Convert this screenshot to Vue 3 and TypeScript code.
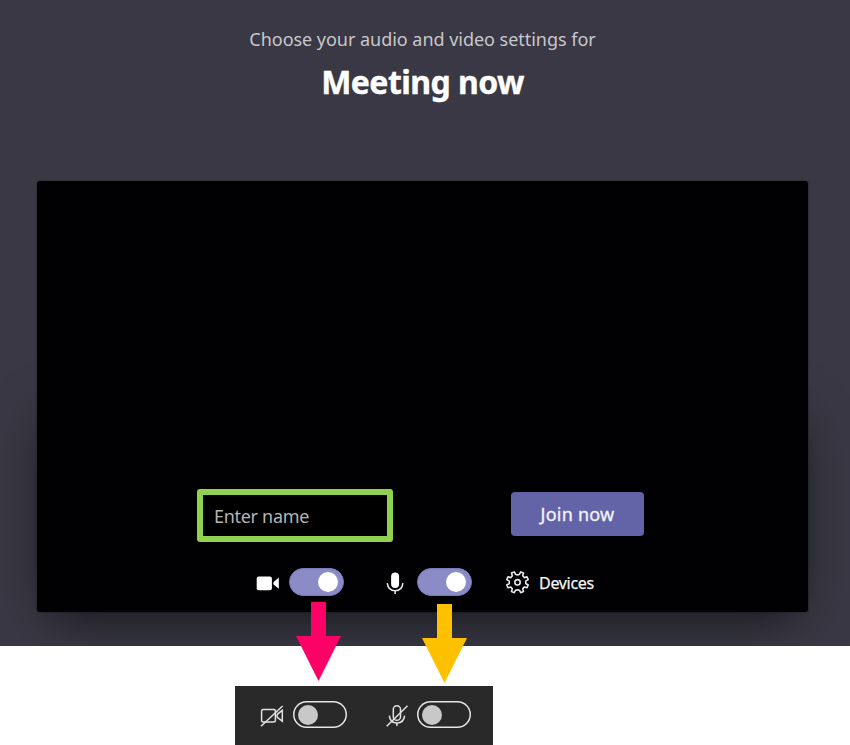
<script setup lang="ts">
import { ref } from 'vue'

const name = ref<string>('')
const camera = ref<boolean>(true)
const microphone = ref<boolean>(true)
</script>

<template>
  <main class="page">
    <section class="prejoin">
      <header class="heading">
        <p class="subtitle">Choose your audio and video settings for</p>
        <h1 class="title">Meeting now</h1>
      </header>

      <div class="preview">
        <div class="join-row">
          <input v-model="name" class="name" type="text" placeholder="Enter name" />
          <button class="join" type="button">Join now</button>
        </div>

        <div class="device-row">
          <svg class="icon" width="24" height="27" viewBox="0 0 24 27">
            <rect x="0.7" y="7.4" width="15.2" height="13.8" rx="2" fill="#fff" />
            <path d="M22.800 8.600v11.200l-5-4.100q-1.200-1.400 0-2.900z" fill="#fff" />
          </svg>
          <button class="toggle on" type="button" aria-label="Camera" @click="camera = !camera">
            <span class="knob"></span>
          </button>
          <svg class="icon mic" width="18" height="27" viewBox="0 0 18 27">
            <rect x="5.1" y="3.6" width="8" height="15.4" rx="4" fill="#fff" />
            <path d="M1.300 14.200c.5 4.700 3.400 7.600 7.800 7.600s7.300-2.900 7.800-7.600M9.100 21.800v3.200" fill="none" stroke="#eee" stroke-width="1.500" />
          </svg>
          <button class="toggle on" type="button" aria-label="Microphone" @click="microphone = !microphone">
            <span class="knob"></span>
          </button>
          <svg class="icon gear" width="24" height="27" viewBox="0 0 24 27">
            <g transform="translate(11.500 13.300)" fill="none" stroke="#e8e8e8" stroke-width="1.600" stroke-linejoin="round">
              <path d="M-1.900-7.900Q0-7 1.900-7.900L3.200-10.400 6-9.200 5.200-6.500Q6.100-5.600 6.700-4.700L9.500-5.400 10.700-2.700 8.200-1.200Q8.300 0 8.200 1.200L10.700 2.700 9.500 5.400 6.700 4.700Q6.100 5.700 5.200 6.500L6 9.200 3.200 10.400 1.900 7.900Q0 7.200-1.900 7.900L-3.200 10.400-6 9.200-5.200 6.500Q-6.100 5.700-6.700 4.700L-9.500 5.400-10.700 2.700-8.200 1.200Q-8.300 0-8.200-1.200L-10.700-2.700-9.500-5.400-6.700-4.700Q-6.100-5.700-5.200-6.500L-6-9.200-3.200-10.400Z" />
              <circle r="2.700" />
            </g>
          </svg>
          <span class="devices">Devices</span>
        </div>
      </div>
    </section>

    <aside class="off-panel">
      <svg class="icon" width="24" height="26" viewBox="0 0 24 26" fill="none" stroke="#e2e2e2" stroke-width="1.500">
        <rect x="1.600" y="7.500" width="13.800" height="12.500" rx="1.500" />
        <path d="M22.300 8.300v10.900l-4.800-3.700q-1.100-1.700 0-3.400zM1 24.300 22.600 4" />
      </svg>
      <span class="toggle off"><span class="knob"></span></span>
      <svg class="icon off-mic" width="22" height="26" viewBox="0 0 22 26" fill="none" stroke="#e2e2e2" stroke-width="1.500">
        <rect x="7.300" y="3.700" width="7.200" height="14.600" rx="3.600" />
        <path d="M3.300 13.600c.4 4.600 3.200 7.300 7.600 7.300s7.300-2.700 7.700-7.300M10.900 20.900v3.200M.7 24.300 21.500 3.700" />
      </svg>
      <span class="toggle off"><span class="knob"></span></span>
    </aside>

    <svg class="arrow pink" width="45" height="79" viewBox="0 0 45 79">
      <path d="M15 0h15v34h15L22.500 79 0 34h15z" fill="#ff0066" />
    </svg>
    <svg class="arrow amber" width="45" height="79" viewBox="0 0 45 79">
      <path d="M15 0h15v34h15L22.500 79 0 34h15z" fill="#ffc000" />
    </svg>
  </main>
</template>

<style>
body {
  background: #fff;
}
</style>

<style scoped>
.page {
  position: relative;
  width: 850px;
  height: 745px;
  overflow: hidden;
  box-sizing: border-box;
  font-family: "Noto Sans", "Open Sans", sans-serif;
}
.prejoin {
  isolation: isolate;
  height: 646px;
  box-sizing: border-box;
  padding: 26px 42px 0 37px;
  background: #393844;
  overflow: hidden;
}
.heading {
  height: 155px;
  text-align: center;
}
.subtitle {
  margin: 0;
  font-size: 18px;
  line-height: 27px;
  letter-spacing: -0.03px;
  color: #c8c7cb;
}
.title {
  margin: 8px 0 0;
  font-size: 32px;
  line-height: 42px;
  font-weight: 700;
  letter-spacing: -0.55px;
  color: #fff;
  -webkit-text-stroke: 0.4px #fff;
}
.preview {
  position: relative;
  display: flex;
  flex-direction: column;
  justify-content: flex-end;
  gap: 27px;
  height: 431px;
  box-sizing: border-box;
  padding-bottom: 16px;
  border-radius: 3px;
  background: #010103;
  box-shadow: 0 0 2px rgba(0, 0, 0, 0.5);
}
.preview::before {
  content: "";
  position: absolute;
  z-index: -1;
  inset: 235px 14px 0;
  box-shadow: 0 4px 50px rgba(0, 0, 0, 0.66);
}
.join-row {
  display: flex;
  align-items: flex-start;
  gap: 118px;
  height: 53px;
  padding-left: 160px;
}
.name {
  width: 196px;
  height: 53px;
  box-sizing: border-box;
  margin: 0;
  padding: 0 11px;
  border: 6px solid #92d050;
  border-radius: 3px;
  outline: none;
  background: #000;
  color: #fff;
  font: 18px "Noto Sans", sans-serif;
  letter-spacing: -0.3px;
}
.name::placeholder {
  color: #b5b5b5;
  opacity: 1;
}
.join {
  width: 133px;
  height: 44px;
  margin-top: 3px;
  padding: 0;
  border: 0;
  border-radius: 4px;
  background: #6264a7;
  color: #f4f4fa;
  font: 400 18px "Noto Sans", sans-serif;
  letter-spacing: 0.25px;
  -webkit-text-stroke: 0.3px #f4f4fa;
}
.device-row {
  display: flex;
  align-items: center;
  height: 27px;
  padding-left: 219px;
}
.icon {
  display: block;
  flex: none;
}
.toggle {
  display: flex;
  flex: none;
  align-items: center;
  box-sizing: border-box;
  border-radius: 14px;
}
.toggle.on {
  justify-content: flex-end;
  width: 55px;
  height: 28px;
  margin-left: 9px;
  margin-top: -1px;
  padding: 0 5px 0 0;
  border: 1px solid #7b7ab8;
  background: #8b8cc7;
}
.toggle.on .knob {
  width: 20px;
  height: 20px;
  border-radius: 50%;
  background: #fff;
}
.icon.mic {
  margin-left: 42px;
}
.mic + .toggle.on {
  margin-left: 12.5px;
}
.icon.gear {
  margin-left: 34.5px;
}
.devices {
  margin-left: 9px;
  padding-top: 2px;
  color: #f3f3f3;
  font-size: 16px;
  line-height: 27px;
  letter-spacing: -0.3px;
  -webkit-text-stroke: 0.25px #f3f3f3;
}
.off-panel {
  display: flex;
  align-items: center;
  width: 258px;
  height: 59px;
  box-sizing: border-box;
  margin: 40px 0 0 235px;
  padding: 0 0 1px 25px;
  background: #292929;
}
.toggle.off {
  width: 54px;
  height: 27px;
  margin: -1px 0 0 9px;
  padding-left: 5px;
  border: 0;
  box-shadow: inset 0 0 0 1.500px #e6e6e6;
}
.toggle.off .knob {
  width: 20px;
  height: 20px;
  border-radius: 50%;
  background: #c8c8c8;
}
.icon.off-mic {
  margin-left: 39px;
}
.arrow {
  position: absolute;
}
.arrow.pink {
  left: 296px;
  top: 602px;
}
.arrow.amber {
  left: 422px;
  top: 604px;
}
</style>
